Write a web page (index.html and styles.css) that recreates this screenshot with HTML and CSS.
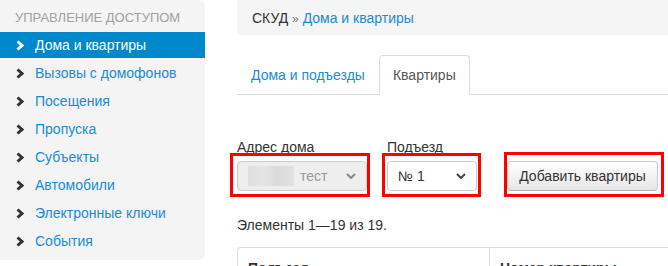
FILE: index.html
```html
<!DOCTYPE html>
<html lang="ru">
<head>
    <meta charset="UTF-8">
    <title>СКУД - Дома и квартиры</title>
    <link rel="stylesheet" href="styles.css">
</head>
<body>
    <div class="layout">
        <aside class="sidebar">
            <div class="sidebar-header">Управление доступом</div>
            <ul class="menu">
                <li class="active"><a href="#"><svg class="chev" viewBox="0 0 8 10"><polyline points="1.5,1 6,5 1.5,9"/></svg>Дома и квартиры</a></li>
                <li><a href="#"><svg class="chev" viewBox="0 0 8 10"><polyline points="1.5,1 6,5 1.5,9"/></svg>Вызовы с домофонов</a></li>
                <li><a href="#"><svg class="chev" viewBox="0 0 8 10"><polyline points="1.5,1 6,5 1.5,9"/></svg>Посещения</a></li>
                <li><a href="#"><svg class="chev" viewBox="0 0 8 10"><polyline points="1.5,1 6,5 1.5,9"/></svg>Пропуска</a></li>
                <li><a href="#"><svg class="chev" viewBox="0 0 8 10"><polyline points="1.5,1 6,5 1.5,9"/></svg>Субъекты</a></li>
                <li><a href="#"><svg class="chev" viewBox="0 0 8 10"><polyline points="1.5,1 6,5 1.5,9"/></svg>Автомобили</a></li>
                <li><a href="#"><svg class="chev" viewBox="0 0 8 10"><polyline points="1.5,1 6,5 1.5,9"/></svg>Электронные ключи</a></li>
                <li><a href="#"><svg class="chev" viewBox="0 0 8 10"><polyline points="1.5,1 6,5 1.5,9"/></svg>События</a></li>
            </ul>
        </aside>

        <main class="content">
            <div class="breadcrumb">СКУД <span class="sep">»</span> <a href="#">Дома и квартиры</a></div>

            <ul class="tabs">
                <li><a href="#">Дома и подъезды</a></li>
                <li class="active"><a href="#">Квартиры</a></li>
            </ul>

            <div class="filters">
                <div class="field field-house">
                    <label>Адрес дома</label>
                    <div class="select disabled marked">
                        <span class="blur"></span>
                        <span class="value">тест</span>
                        <svg class="caret" viewBox="0 0 10 6"><polyline points="1,1 5,5 9,1"/></svg>
                    </div>
                </div>
                <div class="field field-entrance">
                    <label>Подъезд</label>
                    <div class="select marked">
                        <span class="value">№ 1</span>
                        <svg class="caret" viewBox="0 0 10 6"><polyline points="1,1 5,5 9,1"/></svg>
                    </div>
                </div>
                <div class="field field-button">
                    <button class="btn marked">Добавить квартиры</button>
                </div>
            </div>

            <div class="summary">Элементы 1—19 из 19.</div>

            <table class="grid">
                <tr>
                    <th>Подъезд</th>
                    <th>Номер квартиры</th>
                </tr>
            </table>
        </main>
    </div>
</body>
</html>
```

FILE: styles.css
```css
body {
    margin: 0;
    font-family: "Liberation Sans", Arial, sans-serif;
    font-size: 14px;
    color: #333;
    background-color: #fff;
}

a {
    text-decoration: none;
    color: #1a8bd4;
}

.layout {
    display: flex;
    align-items: flex-start;
}

/* sidebar */

.sidebar {
    width: 205px;
    flex: none;
    background-color: #f4f4f4;
    border-radius: 0 6px 6px 0;
    padding-bottom: 4px;
    margin-right: 32px;
}

.sidebar-header {
    height: 32px;
    line-height: 36px;
    padding-left: 15px;
    font-size: 13px;
    color: #a0a0a0;
    text-transform: uppercase;
}

.menu {
    list-style: none;
    margin: 0;
    padding: 0;
}

.menu li {
    margin-bottom: 2px;
}

.menu a {
    display: flex;
    align-items: center;
    height: 26px;
    padding-left: 16px;
    color: #1a8bd4;
}

.chev {
    width: 8px;
    height: 11px;
    margin-right: 11px;
    fill: none;
    stroke: #333;
    stroke-width: 3;
}

.menu li.active a {
    background-color: #0088cc;
    color: #fff;
}

.menu li.active .chev {
    stroke: #fff;
}

/* main */

.content {
    flex: 1;
    min-width: 0;
}

.breadcrumb {
    height: 35px;
    line-height: 36px;
    padding-left: 15px;
    background-color: #f5f5f5;
    border-radius: 0 0 0 5px;
}

.breadcrumb .sep {
    color: #777;
    font-size: 12px;
}

.tabs {
    list-style: none;
    margin: 20px 0 0;
    padding: 0;
    display: flex;
    border-bottom: 1px solid #ddd;
}

.tabs li {
    margin-bottom: -1px;
}

.tabs a {
    display: block;
    line-height: 20px;
    padding: 9px 13px 9px;
    border: 1px solid transparent;
    border-radius: 4px 4px 0 0;
}

.tabs li.active a {
    color: #555;
    background-color: #fff;
    border-color: #ddd #ddd transparent;
}

.filters {
    display: flex;
    align-items: flex-end;
    margin-top: 42px;
}

.field {
    display: flex;
    flex-direction: column;
}

.field label {
    font-size: 14px;
    line-height: 20px;
    margin-bottom: 4px;
    color: #333;
}

.field-house {
    width: 130px;
    margin-right: 20px;
}

.field-entrance {
    width: 90px;
    margin-right: 30px;
}

.select {
    position: relative;
    display: flex;
    align-items: center;
    height: 28px;
    padding: 0 10px;
    border: 1px solid #ccc;
    border-radius: 4px;
    background-color: #fff;
    color: #333;
}

.select.disabled {
    background-color: #eee;
    color: #999;
}

.select .value {
    flex: 1;
}

.blur {
    width: 46px;
    height: 20px;
    margin-right: 6px;
    background: linear-gradient(90deg, #dcdcdc 0, #e3e3e3 15px, #d8d8d8 30px, #e0e0e0 46px);
    opacity: 0.9;
}

.caret {
    width: 10px;
    height: 6px;
    fill: none;
    stroke: #444;
    stroke-width: 2;
}

.select.disabled .caret {
    stroke: #888;
}

.btn {
    position: relative;
    height: 30px;
    width: 151px;
    padding: 0 10px;
    font-family: inherit;
    font-size: 14px;
    color: #333;
    border: 1px solid #ccc;
    border-bottom-color: #b3b3b3;
    border-radius: 4px;
    background: linear-gradient(#fff, #e6e6e6);
}

/* red annotation frames */

.marked::after {
    content: "";
    position: absolute;
    top: -9px;
    left: -8px;
    right: -4px;
    bottom: -7px;
    border: 3px solid #f00;
}

.field-entrance .marked::after {
    left: -6px;
    right: -5px;
}

.btn.marked::after {
    top: -10px;
    left: -4px;
    right: -7px;
    bottom: -7px;
}

.summary {
    margin-top: 24px;
    line-height: 20px;
}

.grid {
    margin-top: 12px;
    width: 100%;
    border-collapse: separate;
    border-spacing: 0;
}

.grid th {
    text-align: left;
    padding: 12px 10px;
    border-top: 1px solid #ddd;
    border-left: 1px solid #ddd;
    font-weight: bold;
    color: #333;
}

.grid th:first-child {
    width: 231px;
    border-radius: 4px 0 0 0;
}
```
